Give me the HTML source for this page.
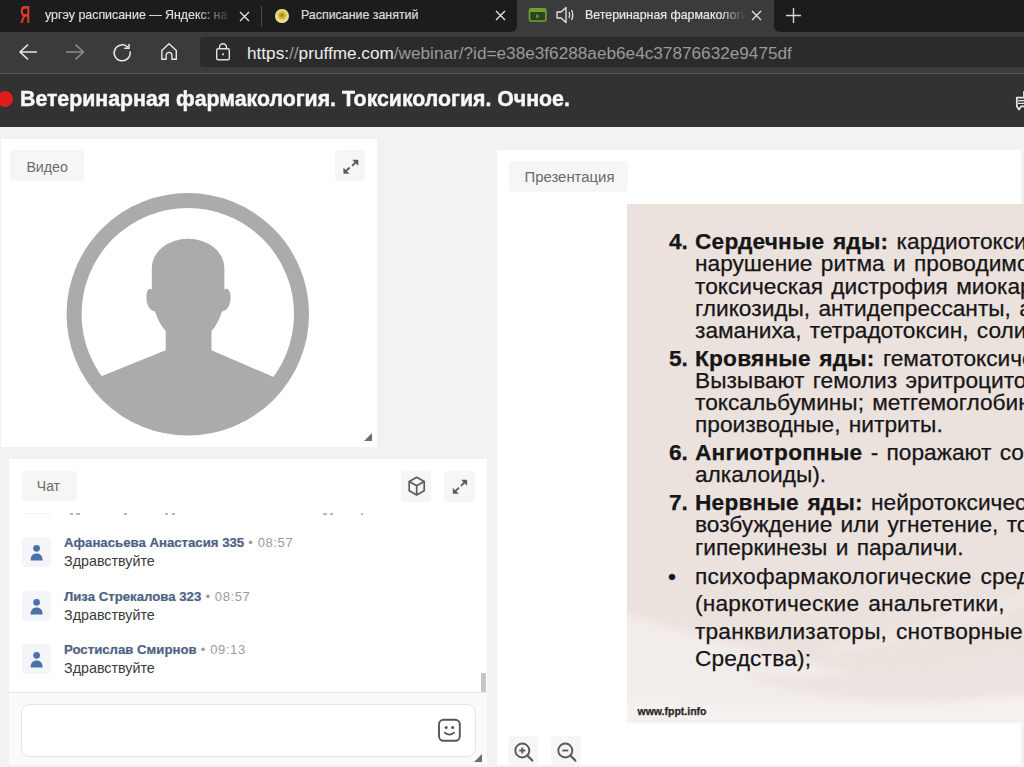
<!DOCTYPE html>
<html><head><meta charset="utf-8">
<style>
*{margin:0;padding:0;box-sizing:border-box}
html,body{width:1024px;height:767px;overflow:hidden;background:#f2f2f2;font-family:"Liberation Sans",sans-serif}
.a{position:absolute}
.t{position:absolute;white-space:nowrap}
.sl .t{word-spacing:2px}
.sl b{letter-spacing:0.2px}
</style></head><body>
<!-- tab strip -->
<div class="a" style="left:0;top:0;width:1024px;height:32px;background:#3b3b3b"></div>
<div class="a" style="left:0;top:0;width:517px;height:32px;background:#1c1c1c;border-bottom-right-radius:6px"></div>
<div class="a" style="left:774px;top:0;width:250px;height:32px;background:#1c1c1c;border-bottom-left-radius:6px"></div>
<!-- toolbar -->
<div class="a" style="left:0;top:32px;width:1024px;height:41px;background:#3b3b3b"></div>
<div class="a" style="left:0;top:73px;width:1024px;height:1px;background:#5a5a5a"></div>
<div class="a" style="left:200px;top:37px;width:830px;height:30px;background:#2b2b2b;border-radius:4px"></div>
<!-- page header -->
<div class="a" style="left:0;top:74px;width:1024px;height:53px;background:#323232"></div>


<!-- tab1 -->
<div class="t" style="left:20px;top:4px;font-size:23px;line-height:1;font-weight:bold;color:#d93a30;transform:scaleX(0.62);transform-origin:left top">Я</div>
<div class="t" style="left:45px;top:9.4px;font-size:12.4px;line-height:1;color:#dedede;-webkit-text-stroke:0.2px currentColor;width:188px;overflow:hidden;-webkit-mask-image:linear-gradient(90deg,#000 80%,transparent 100%)">ургэу расписание — Яндекс: на</div>
<svg class="a" style="left:238px;top:10px" width="13" height="13" viewBox="0 0 13 13"><path d="M2 2L11 11M11 2L2 11" stroke="#e6e6e6" stroke-width="1.3"/></svg>
<div class="a" style="left:261px;top:6px;width:1px;height:21px;background:#4a4a4a"></div>
<!-- tab2 -->
<div class="a" style="left:275px;top:8.5px;width:14px;height:14.5px;border-radius:50%;background:radial-gradient(circle at 50% 45%,#8f7a10 0,#d8b840 30%,#e6e08a 55%,#e4f0b8 75%,#d0e4a0 100%)"></div>
<div class="t" style="left:301px;top:9.4px;font-size:12.4px;line-height:1;color:#dedede;-webkit-text-stroke:0.2px currentColor">Расписание занятий</div>
<svg class="a" style="left:494px;top:9px" width="13" height="13" viewBox="0 0 13 13"><path d="M2 2L11 11M11 2L2 11" stroke="#e6e6e6" stroke-width="1.3"/></svg>
<!-- active tab -->
<svg class="a" style="left:527px;top:6px" width="21" height="18" viewBox="0 0 21 18"><rect x="2.5" y="2.8" width="16.3" height="12.2" rx="1.6" fill="#2d4418" stroke="#6fa035" stroke-width="1.7"/><path d="M2.5 3.6Q10.6 1.2 18.8 3.6V6H2.5Z" fill="#6fa035"/><path d="M9.2 8L12.6 10.2L9.2 12.4Z" fill="#6a8a50"/></svg>
<svg class="a" style="left:555px;top:5px" width="21" height="20" viewBox="0 0 21 20"><path d="M2 7H6L11 2.5V17.5L6 13H2Z" fill="none" stroke="#e6e6e6" stroke-width="1.3" stroke-linejoin="round"/><path d="M14 7Q15.5 10 14 13M16.5 5Q19 10 16.5 15" fill="none" stroke="#e6e6e6" stroke-width="1.3"/></svg>
<div class="t" style="left:585px;top:9.4px;font-size:12.4px;line-height:1;color:#e8e8e8;-webkit-text-stroke:0.2px currentColor;width:160px;overflow:hidden;-webkit-mask-image:linear-gradient(90deg,#000 85%,transparent 100%)">Ветеринарная фармакология</div>
<svg class="a" style="left:750px;top:9px" width="13" height="13" viewBox="0 0 13 13"><path d="M2 2L11 11M11 2L2 11" stroke="#e6e6e6" stroke-width="1.3"/></svg>
<svg class="a" style="left:784px;top:6px" width="19" height="19" viewBox="0 0 19 19"><path d="M9.5 2V17M2 9.5H17" stroke="#d6d6d6" stroke-width="1.4"/></svg>
<!-- toolbar icons -->
<svg class="a" style="left:16px;top:42px" width="24" height="20" viewBox="0 0 24 20"><path d="M21 10H4M12 2.6L4 10L12 17.4" fill="none" stroke="#e8e8e8" stroke-width="1.5"/></svg>
<svg class="a" style="left:63px;top:42px" width="24" height="20" viewBox="0 0 24 20"><path d="M3 10H20.5M12.5 2.6L20.5 10L12.5 17.4" fill="none" stroke="#8c8c8c" stroke-width="1.5"/></svg>
<svg class="a" style="left:111px;top:41px" width="22" height="22" viewBox="0 0 22 22"><path d="M19.0 10.3A8 8 0 1 1 17.1 6.5" fill="none" stroke="#e8e8e8" stroke-width="1.5"/><path d="M13.2 7.3H18V3.1" fill="none" stroke="#e8e8e8" stroke-width="1.5"/></svg>
<svg class="a" style="left:159px;top:41px" width="20" height="20" viewBox="0 0 20 20"><path d="M2.8 18.3V9.5L10 2.8L17.3 9.5V18.3H12.9V14.3A2.9 2.9 0 0 0 7.1 14.3V18.3Z" fill="none" stroke="#e8e8e8" stroke-width="1.4" stroke-linejoin="round"/></svg>
<svg class="a" style="left:214px;top:42px" width="18" height="20" viewBox="0 0 18 20"><path d="M5.5 6.8V5.2A3.5 3.5 0 0 1 12.5 5.2V6.8" fill="none" stroke="#e0e0e0" stroke-width="1.4"/><rect x="2.7" y="6.8" width="12.6" height="11" rx="1.5" fill="none" stroke="#e0e0e0" stroke-width="1.4"/><circle cx="9" cy="12.3" r="1.1" fill="#e0e0e0"/></svg>
<div class="t" style="left:247px;top:44.8px;font-size:17.2px;line-height:1;color:#9a9a9a"><span style="color:#ececec">https:</span>//<span style="color:#ececec">pruffme.com</span>/webinar/?id=e38e3f6288aeb6e4c37876632e9475df</div>
<!-- page header -->
<div class="a" style="left:-3px;top:91px;width:16px;height:16px;border-radius:50%;background:#e01b1b"></div>
<div class="t" style="left:20px;top:89.2px;font-size:21.3px;line-height:1;font-weight:bold;color:#f7f7f7;-webkit-text-stroke:0.45px #f7f7f7;transform:scaleY(1.05);transform-origin:0 18px">Ветеринарная фармакология. Токсикология. Очное.</div>

<svg class="a" style="left:1010px;top:88px" width="14" height="26" viewBox="1010 88 14 26"><path d="M1016.8 97.6H1026V106.3H1021.3L1019 109.5L1016.8 106.3Z" fill="none" stroke="#e6e6e6" stroke-width="1.7" stroke-linejoin="round"/><path d="M1018 100.6H1024M1018 103.4H1024" stroke="#e6e6e6" stroke-width="1.3"/><path d="M1023.6 91V97" stroke="#cfcfcf" stroke-width="1.2"/></svg>
<!-- video panel -->
<div class="a" style="left:1px;top:139px;width:376px;height:308px;background:#fff"></div>
<div class="a" style="left:10px;top:150px;width:74px;height:31px;background:#f6f6f6;border-radius:4px"></div>
<div class="t" style="left:26.4px;top:159.6px;font-size:14.2px;line-height:1;color:#6a6a6a">Видео</div>
<div class="a" style="left:335px;top:150px;width:30px;height:31px;background:#f6f6f6;border-radius:4px"></div>
<svg class="a" style="left:335px;top:150px" width="30" height="31" viewBox="0 0 30 31"><path d="M8.7 23.4V18.2L13.9 23.4Z M23 10H17.8L23 15.2Z" fill="#595959" stroke="#595959" stroke-width="0.5" stroke-linejoin="round"/><path d="M10.6 21.5L14.6 17.5M21.1 11.9L17.1 15.9" stroke="#595959" stroke-width="1.8"/></svg>
<svg class="a" style="left:0;top:139px" width="377" height="308" viewBox="0 139 377 308">
<defs><clipPath id="cc"><circle cx="187.8" cy="314.2" r="108"/></clipPath></defs>
<circle cx="187.8" cy="314.2" r="113.7" fill="none" stroke="#ababab" stroke-width="15"/>
<path clip-path="url(#cc)" fill="#ababab" d="M151.8 268A36.3 29.2 0 0 1 224.4 268L224.4 289.5C228.5 287 231 292 230.5 299C230 306 226.5 311 222 311.5C219.5 319 216 326 211.5 331L211.5 350.2L320 397L320 450L50 450L50 397L165.7 350.2L165.7 331C161 326 157.5 319 155 311.5C150.5 311 147 306 146.5 299C146 292 148.5 287 151.8 289.5Z"/>
</svg>
<svg class="a" style="left:362px;top:431px" width="12" height="12" viewBox="0 0 12 12"><path d="M10 2L10 10L2 10Z" fill="#6e6e6e"/></svg>

<!-- chat panel -->
<div class="a" style="left:9px;top:459px;width:478px;height:306px;background:#fff"></div>
<div class="a" style="left:22px;top:471px;width:55px;height:30px;background:#f6f6f6;border-radius:4px"></div>
<div class="t" style="left:36.8px;top:479.4px;font-size:14px;line-height:1;color:#6a6a6a">Чат</div>
<div class="a" style="left:401px;top:471px;width:30px;height:31px;background:#f6f6f6;border-radius:4px"></div>
<svg class="a" style="left:401px;top:471px" width="30" height="31" viewBox="0 0 30 31"><path d="M15.7 6.3L23.2 10.5V19.8L15.7 24L8.2 19.8V10.5Z M8.2 10.5L15.7 14.8L23.2 10.5 M15.7 14.8V24" fill="none" stroke="#5c5c5c" stroke-width="1.7" stroke-linejoin="round"/></svg>
<div class="a" style="left:444px;top:471px;width:31px;height:31px;background:#f6f6f6;border-radius:4px"></div>
<svg class="a" style="left:444px;top:471px" width="31" height="31" viewBox="0 0 31 31"><path d="M9.1 22.6V17.4L14.3 22.6Z M22.8 9H17.6L22.8 14.2Z" fill="#595959" stroke="#595959" stroke-width="0.5" stroke-linejoin="round"/><path d="M11 20.7L15 16.7M20.9 10.9L16.9 14.9" stroke="#595959" stroke-width="1.8"/></svg>
<div class="a" style="left:24px;top:513px;width:27px;height:1px;background:#eef0f3"></div><div class="a" style="left:70px;top:513px;width:3px;height:2px;background:#9a9a9a;opacity:0.7"></div><div class="a" style="left:76px;top:513px;width:4px;height:2px;background:#9a9a9a;opacity:0.7"></div><div class="a" style="left:124px;top:513px;width:3px;height:2px;background:#9a9a9a;opacity:0.7"></div><div class="a" style="left:165px;top:513px;width:3px;height:2px;background:#9a9a9a;opacity:0.7"></div><div class="a" style="left:172px;top:513px;width:3px;height:2px;background:#9a9a9a;opacity:0.7"></div><div class="a" style="left:323px;top:513px;width:4px;height:2px;background:#9a9a9a;opacity:0.7"></div><div class="a" style="left:330px;top:513px;width:3px;height:2px;background:#9a9a9a;opacity:0.7"></div><div class="a" style="left:361px;top:513px;width:2px;height:2px;background:#9a9a9a;opacity:0.7"></div>
<div class="a" style="left:22px;top:537px;width:29px;height:30px;background:#f3f5f8;border-radius:4px"></div>
<svg class="a" style="left:22px;top:537px" width="29" height="30" viewBox="0 0 29 30"><circle cx="14.6" cy="11.3" r="3.4" fill="#4a72a8"/><path d="M8.6 23.6C8.6 18.5 10.8 16.4 14.6 16.4C18.4 16.4 20.6 18.5 20.6 23.6Z" fill="#4a72a8"/></svg>
<div class="t" style="left:64px;top:535.5px;font-size:13.2px;line-height:1;font-weight:bold;color:#4d6085;-webkit-text-stroke:0.2px #4d6085">Афанасьева Анастасия 335<span style="font-weight:normal;color:#9b9b9b;letter-spacing:0.6px;font-size:13px;-webkit-text-stroke:0"> • 08:57</span></div>
<div class="t" style="left:64px;top:553.5px;font-size:14.3px;line-height:1;color:#3a3a3a">Здравствуйте</div>
<div class="a" style="left:22px;top:591px;width:29px;height:30px;background:#f3f5f8;border-radius:4px"></div>
<svg class="a" style="left:22px;top:591px" width="29" height="30" viewBox="0 0 29 30"><circle cx="14.6" cy="11.3" r="3.4" fill="#4a72a8"/><path d="M8.6 23.6C8.6 18.5 10.8 16.4 14.6 16.4C18.4 16.4 20.6 18.5 20.6 23.6Z" fill="#4a72a8"/></svg>
<div class="t" style="left:64px;top:589.5px;font-size:13.2px;line-height:1;font-weight:bold;color:#4d6085;-webkit-text-stroke:0.2px #4d6085">Лиза Стрекалова 323<span style="font-weight:normal;color:#9b9b9b;letter-spacing:0.6px;font-size:13px;-webkit-text-stroke:0"> • 08:57</span></div>
<div class="t" style="left:64px;top:607.5px;font-size:14.3px;line-height:1;color:#3a3a3a">Здравствуйте</div>
<div class="a" style="left:22px;top:644px;width:29px;height:30px;background:#f3f5f8;border-radius:4px"></div>
<svg class="a" style="left:22px;top:644px" width="29" height="30" viewBox="0 0 29 30"><circle cx="14.6" cy="11.3" r="3.4" fill="#4a72a8"/><path d="M8.6 23.6C8.6 18.5 10.8 16.4 14.6 16.4C18.4 16.4 20.6 18.5 20.6 23.6Z" fill="#4a72a8"/></svg>
<div class="t" style="left:64px;top:642.5px;font-size:13.2px;line-height:1;font-weight:bold;color:#4d6085;-webkit-text-stroke:0.2px #4d6085">Ростислав Смирнов<span style="font-weight:normal;color:#9b9b9b;letter-spacing:0.6px;font-size:13px;-webkit-text-stroke:0"> • 09:13</span></div>
<div class="t" style="left:64px;top:660.5px;font-size:14.3px;line-height:1;color:#3a3a3a">Здравствуйте</div>

<div class="a" style="left:9px;top:693px;width:478px;height:72px;background:#fafafa"></div>
<div class="a" style="left:9px;top:692px;width:478px;height:1px;background:#e6e6e6"></div>
<div class="a" style="left:481px;top:673px;width:5px;height:19px;background:#c6c6c6;border-radius:1px"></div>
<div class="a" style="left:21px;top:704px;width:455px;height:53px;border:1px solid #e4e4e4;border-radius:9px;background:#fff"></div>
<svg class="a" style="left:436px;top:717px" width="27" height="27" viewBox="0 0 27 27"><rect x="3" y="2.8" width="20.8" height="21" rx="4.5" fill="none" stroke="#555" stroke-width="1.9"/><circle cx="10.2" cy="10.6" r="1.5" fill="#555"/><circle cx="16.7" cy="10.6" r="1.5" fill="#555"/><path d="M8.8 15.6Q13.4 19.6 18 15.6" fill="none" stroke="#555" stroke-width="1.8" stroke-linecap="round"/></svg>
<svg class="a" style="left:472px;top:752px" width="12" height="12" viewBox="0 0 12 12"><path d="M10 2L10 10L2 10Z" fill="#6e6e6e"/></svg>

<!-- presentation panel -->
<div class="a" style="left:497px;top:150px;width:524px;height:615px;background:#fff"></div>
<div class="a" style="left:509px;top:161px;width:119px;height:31px;background:#f6f6f6;border-radius:4px"></div>
<div class="t" style="left:524.5px;top:169.7px;font-size:14.9px;line-height:1;color:#6a6a6a">Презентация</div>
<div class="a" style="left:508px;top:736px;width:30px;height:29px;background:#f6f6f6;border-radius:4px"></div>
<div class="a" style="left:551px;top:736px;width:30px;height:29px;background:#f6f6f6;border-radius:4px"></div>
<svg class="a" style="left:508px;top:736px" width="30" height="29" viewBox="0 0 30 29"><circle cx="14.3" cy="14.5" r="7" fill="none" stroke="#5a5a5a" stroke-width="1.9"/><path d="M19.3 19.5L24.3 24.6" stroke="#5a5a5a" stroke-width="2.2" stroke-linecap="round"/><path d="M11.3 14.5H17.3M14.3 11.5V17.5" stroke="#5a5a5a" stroke-width="1.8"/></svg>
<svg class="a" style="left:551px;top:736px" width="30" height="29" viewBox="0 0 30 29"><circle cx="14.3" cy="14.5" r="7" fill="none" stroke="#5a5a5a" stroke-width="1.9"/><path d="M19.3 19.5L24.3 24.6" stroke="#5a5a5a" stroke-width="2.2" stroke-linecap="round"/><path d="M11.3 14.5H17.3" stroke="#5a5a5a" stroke-width="1.8"/></svg>

<div class="a sl" style="left:627px;top:204px;width:397px;height:519px;background:#ebe1dd;overflow:hidden;color:#161616;-webkit-text-stroke:0.25px #161616">
<svg class="a" style="left:0;top:0" width="397" height="519" viewBox="0 0 397 519">
<defs><filter id="bl" x="-20%" y="-20%" width="140%" height="140%"><feGaussianBlur stdDeviation="4"/></filter></defs>
<g filter="url(#bl)">
<path d="M-20 405C60 425 140 452 230 468C300 480 360 476 420 462L420 540L-20 540Z" fill="#f2ecea"/>
<path d="M110 470C200 476 300 468 420 440L420 492C300 505 200 500 110 470Z" fill="#ece3df" opacity="0.85"/>
<path d="M-20 490C100 505 300 505 420 488L420 540L-20 540Z" fill="#f5f1ef"/>
<path d="M200 440C260 430 330 410 420 380L420 395C330 425 260 445 200 452Z" fill="#f0e9e6" opacity="0.7"/>
</g>
</svg>
<div class="t" style="left:42px;top:25.58px;font-size:22.7px;line-height:1;font-weight:bold">4.</div>
<div class="t" id="L1" style="left:68px;top:25.58px;font-size:22.7px;line-height:1"><b>Сердечные яды:</b> кардиотоксические</div>
<div class="t" id="L2" style="left:68px;top:48.48px;font-size:22.7px;line-height:1">нарушение ритма и проводимости</div>
<div class="t" id="L3" style="left:68px;top:70.98px;font-size:22.7px;line-height:1">токсическая дистрофия миокарда</div>
<div class="t" id="L4" style="left:68px;top:93.28px;font-size:22.7px;line-height:1">гликозиды, антидепрессанты, а</div>
<div class="t" id="L5" style="left:68px;top:115.28px;font-size:22.7px;line-height:1">заманиха, тетрадотоксин, соли</div>
<div class="t" style="left:42px;top:142.88px;font-size:22.7px;line-height:1;font-weight:bold">5.</div>
<div class="t" id="L6" style="left:68px;top:142.88px;font-size:22.7px;line-height:1"><b>Кровяные яды:</b> гематотоксические</div>
<div class="t" id="L7" style="left:68px;top:164.78px;font-size:22.7px;line-height:1">Вызывают гемолиз эритроцитов</div>
<div class="t" id="L8" style="left:68px;top:187.38px;font-size:22.7px;line-height:1">токсальбумины; метгемоглобин</div>
<div class="t" id="L9" style="left:68px;top:209.38px;font-size:22.7px;line-height:1">производные, нитриты.</div>
<div class="t" style="left:42px;top:236.78px;font-size:22.7px;line-height:1;font-weight:bold">6.</div>
<div class="t" id="L10" style="left:68px;top:236.78px;font-size:22.7px;line-height:1"><b>Ангиотропные</b> - поражают сосуды</div>
<div class="t" id="L11" style="left:68px;top:258.68px;font-size:22.7px;line-height:1">алкалоиды).</div>
<div class="t" style="left:42px;top:286.78px;font-size:22.7px;line-height:1;font-weight:bold">7.</div>
<div class="t" id="L12" style="left:68px;top:286.78px;font-size:22.7px;line-height:1"><b>Нервные яды:</b> нейротоксические</div>
<div class="t" id="L13" style="left:68px;top:309.48px;font-size:22.7px;line-height:1">возбуждение или угнетение, то</div>
<div class="t" id="L14" style="left:68px;top:331.78px;font-size:22.7px;line-height:1">гиперкинезы и параличи.</div>
<div class="t" style="left:41px;top:360.58px;font-size:22.7px;line-height:1">•</div>
<div class="t" id="L15" style="letter-spacing:0.18px;word-spacing:2.5px;left:68px;top:360.58px;font-size:22.7px;line-height:1">психофармакологические средства</div>
<div class="t" id="L16" style="letter-spacing:0.18px;word-spacing:2.5px;left:68px;top:387.68px;font-size:22.7px;line-height:1">(наркотические анальгетики,</div>
<div class="t" id="L17" style="letter-spacing:0.18px;word-spacing:2.5px;left:68px;top:415.68px;font-size:22.7px;line-height:1">транквилизаторы, снотворные</div>
<div class="t" id="L18" style="letter-spacing:0.18px;word-spacing:2.5px;left:68px;top:443.18px;font-size:22.7px;line-height:1">Средства);</div>
<div class="t" style="left:10.5px;top:501.5px;font-size:10.5px;line-height:1;font-weight:bold;color:#2a2a2a">www.fppt.info</div>
</div>

</body></html>
